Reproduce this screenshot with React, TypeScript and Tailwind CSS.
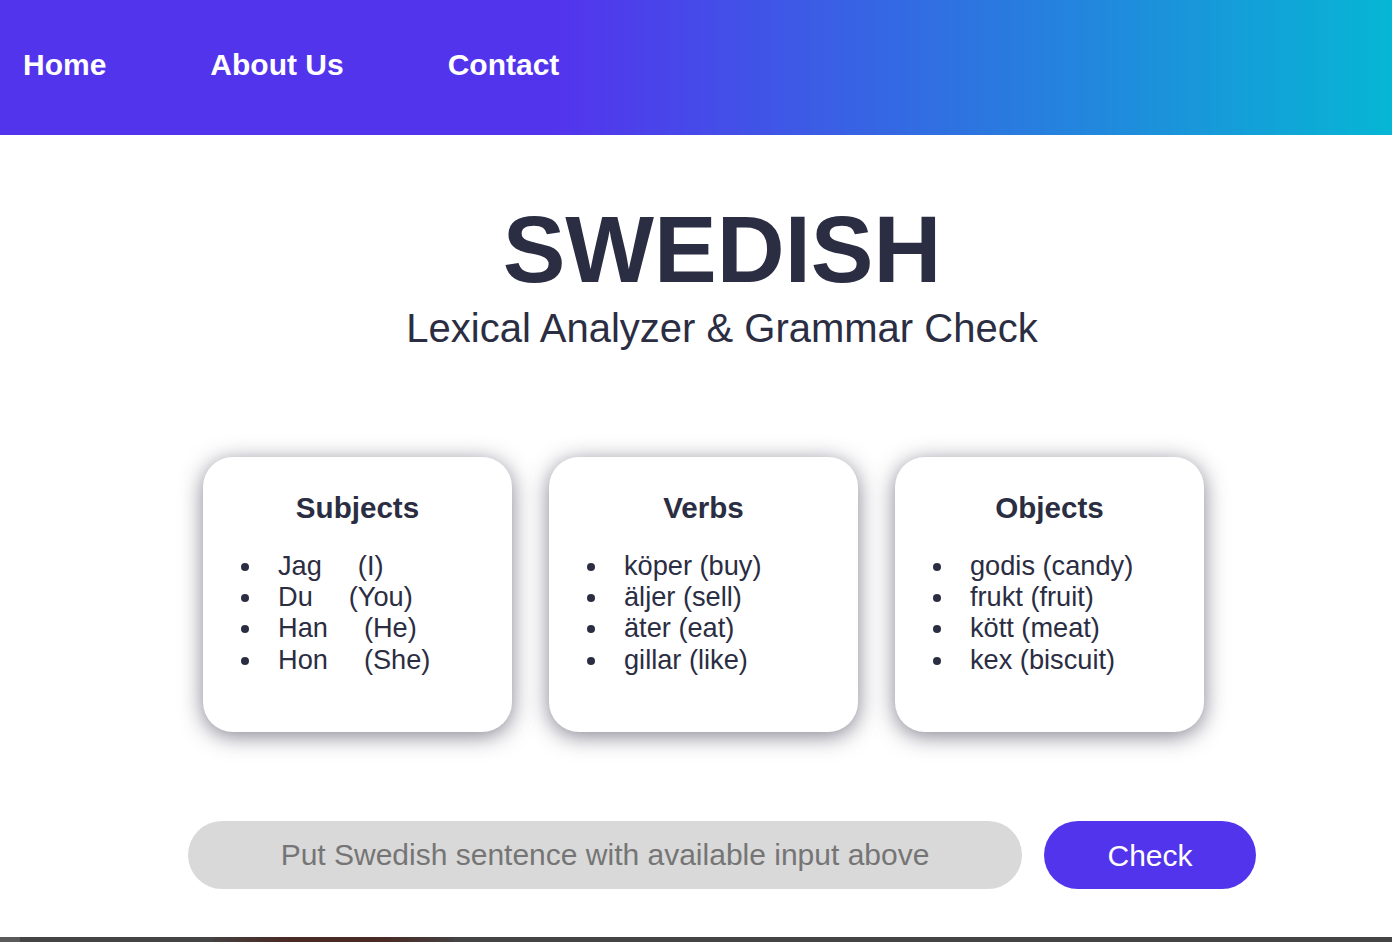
import React from "react";

const font = { fontFamily: '"Liberation Sans", Arial, sans-serif' };

function Bullet({ children }: { children: React.ReactNode }) {
  return (
    <li className="flex items-start leading-[31.4px]">
      <span className="ml-[38px] mt-[13px] h-[8px] w-[8px] shrink-0 rounded-full bg-[#2b2d42]" />
      <span className="ml-[29px] flex whitespace-nowrap">{children}</span>
    </li>
  );
}

function Card({ title, children }: { title: string; children: React.ReactNode }) {
  return (
    <div className="mr-[37px] h-[275px] w-[309px] shrink-0 rounded-[30px] bg-white pt-[36px] shadow-[0_4px_22px_rgba(55,52,75,0.62)]">
      <h2 className="text-center text-[29.6px] font-bold leading-none text-[#2b2d42]">{title}</h2>
      <ul className="mt-[27px] text-[27.2px] text-[#2b2d42]">{children}</ul>
    </div>
  );
}

export default function App() {
  return (
    <div style={font} className="min-h-[942px] w-full overflow-hidden bg-white">
      <header className="flex h-[135px] items-start gap-[104px] bg-[linear-gradient(to_right,#5334ed_40%,#06b6d4_100%)] pl-[23px] pt-[50px]">
        <a className="text-[30px] font-bold leading-none text-white">Home</a>
        <a className="text-[30px] font-bold leading-none text-white">About Us</a>
        <a className="text-[30px] font-bold leading-none text-white">Contact</a>
      </header>

      <main className="flex flex-col items-center pl-[52px]">
        <h1 className="mt-[68px] text-[94px] font-bold leading-none text-[#2b2d42]">SWEDISH</h1>
        <p className="mt-[11px] text-[40px] leading-none text-[#2b2d42]">Lexical Analyzer &amp; Grammar Check</p>

        <div className="mt-[109px] flex">
          <Card title="Subjects">
            <Bullet>
              <span>Jag</span>
              <span className="ml-[36px]">(I)</span>
            </Bullet>
            <Bullet>
              <span>Du</span>
              <span className="ml-[36px]">(You)</span>
            </Bullet>
            <Bullet>
              <span>Han</span>
              <span className="ml-[36px]">(He)</span>
            </Bullet>
            <Bullet>
              <span>Hon</span>
              <span className="ml-[36px]">(She)</span>
            </Bullet>
          </Card>
          <Card title="Verbs">
            <Bullet>köper (buy)</Bullet>
            <Bullet>äljer (sell)</Bullet>
            <Bullet>äter (eat)</Bullet>
            <Bullet>gillar (like)</Bullet>
          </Card>
          <Card title="Objects">
            <Bullet>godis (candy)</Bullet>
            <Bullet>frukt (fruit)</Bullet>
            <Bullet>kött (meat)</Bullet>
            <Bullet>kex (biscuit)</Bullet>
          </Card>
        </div>

        <div className="mt-[89px] flex">
          <input
            type="text"
            placeholder="Put Swedish sentence with available input above"
            className="h-[68px] w-[834px] rounded-full bg-[#d9d9d9] text-center text-[30px] text-[#2b2d42] outline-none placeholder:text-[#757575]"
          />
          <button className="ml-[22px] h-[68px] w-[212px] rounded-full bg-[#5334ed] text-[30px] text-white">
            Check
          </button>
        </div>
      </main>

      <div className="mt-[48px] flex h-[5px] w-full bg-[#444444]">
        <div className="h-full w-[20px] bg-[#5a5a5a]" />
        <div className="ml-[193px] h-full w-[240px] bg-[linear-gradient(to_right,#454040,#4a2a24_30%,#4a2a24_70%,#454040)]" />
      </div>
    </div>
  );
}
